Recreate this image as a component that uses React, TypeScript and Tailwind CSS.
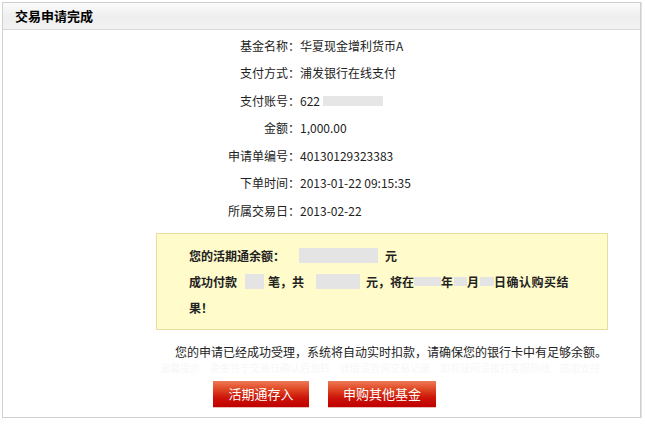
import React from "react";

const rows: [string, React.ReactNode][] = [
  ["基金名称：", "华夏现金增利货币A"],
  ["支付方式：", "浦发银行在线支付"],
  [
    "支付账号：",
    <span className="flex items-center">
      622
      <span className="ml-[3px] inline-block h-[10px] w-[60px] bg-[#e6e6e6]" />
    </span>,
  ],
  ["金额：", "1,000.00"],
  ["申请单编号：", "40130129323383"],
  ["下单时间：", "2013-01-22 09:15:35"],
  ["所属交易日：", "2013-02-22"],
];

export default function App() {
  return (
    <div className="h-[425px] w-[645px] bg-white pl-[2px] pt-[2px] font-['Noto_Sans_CJK_SC','Noto_Sans',sans-serif] text-[12px] text-[#222]">
      <div className="flex h-[416px] w-[639px] flex-col border border-[#d0d0d0] shadow-[1px_0_0_#e2e2e2]">
        <div className="flex h-[27px] items-center border-b border-[#d8d8d8] bg-[linear-gradient(to_bottom,#fbfbfb_0%,#eeeeee_55%,#f2f2f2_100%)] pl-[12px] text-[13px] font-bold text-black">
          交易申请完成
        </div>
        <div className="flex flex-col pt-[2px]">
          {rows.map(([label, value], i) => (
            <div key={i} className="flex h-[27.5px] items-center">
              <div className="w-[297px] text-right">{label}</div>
              <div className="flex items-center">{value}</div>
            </div>
          ))}
        </div>
        <div className="ml-[153px] mt-[8px] h-[97px] w-[452px] border border-[#e6dd9e] bg-[#fffbcb] pl-[32px] pt-[9px] font-bold text-[#222]">
          <div className="flex h-[26px] items-center whitespace-nowrap">
            您的活期通余额：
            <span className="ml-[14px] inline-block h-[15px] w-[79px] bg-[#e4e4e4]" />
            <span className="ml-[7px]">元</span>
          </div>
          <div className="flex h-[26px] items-center whitespace-nowrap">
            成功付款
            <span className="ml-[8px] inline-block h-[15px] w-[19px] bg-[#e4e4e4]" />
            <span className="ml-[4px]">笔，共</span>
            <span className="ml-[12px] inline-block h-[15px] w-[44px] bg-[#e4e4e4]" />
            <span className="ml-[6px]">元，将在</span>
            <span className="inline-block h-[9px] w-[27px] bg-[#e4e4e4]" />
            <span>年</span>
            <span className="ml-[1px] inline-block h-[9px] w-[13px] bg-[#e4e4e4]" />
            <span>月</span>
            <span className="ml-[1px] inline-block h-[9px] w-[14px] bg-[#e4e4e4]" />
            <span className="tracking-[0.5px]">日确认购买结</span>
          </div>
          <div className="flex h-[26px] items-center whitespace-nowrap">果！</div>
        </div>
        <div className="ml-[172px] mt-[12px] flex h-[20px] items-center whitespace-nowrap">
          您的申请已经成功受理，系统将自动实时扣款，请确保您的银行卡中有足够余额。
        </div>
        <div className="ml-[157px] flex h-[12px] items-center whitespace-nowrap text-[10px] text-[#f7f7f7]">
          温馨提示：资金将于交易日确认后划转　详情请查询交易记录　如有疑问请拨打客服热线　感谢支持
        </div>
        <div className="ml-[210px] mt-[7px] flex gap-[19px]">
          <button className="flex h-[26px] w-[96px] items-center justify-center bg-[linear-gradient(to_bottom,#ee7a58_0%,#e04a26_30%,#cc1408_65%,#bf0000_100%)] text-[13px] text-white shadow-[0_1px_0_#e8c0b8]">
            活期通存入
          </button>
          <button className="flex h-[26px] w-[108px] items-center justify-center bg-[linear-gradient(to_bottom,#ee7a58_0%,#e04a26_30%,#cc1408_65%,#bf0000_100%)] text-[13px] text-white shadow-[0_1px_0_#e8c0b8]">
            申购其他基金
          </button>
        </div>
      </div>
    </div>
  );
}
